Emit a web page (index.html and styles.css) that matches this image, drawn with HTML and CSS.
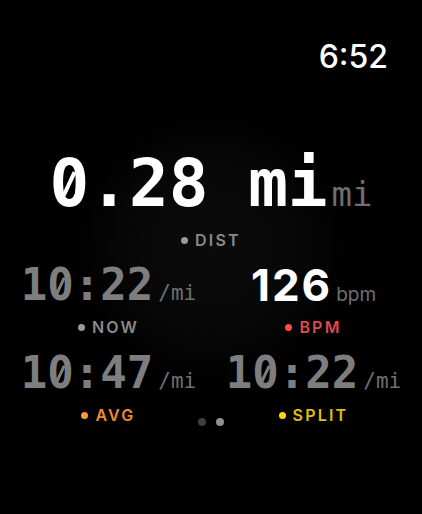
FILE: index.html
```html
<!DOCTYPE html>
<html lang="en">
<head>
<meta charset="utf-8">
<title>Workout</title>
<link rel="stylesheet" href="styles.css">
</head>
<body>
<div class="screen">
  <div class="status">
    <span class="clock">6:52</span>
  </div>

  <div class="hero">
    <span class="hero-value"><span class="z">0</span>.28 mi</span><span class="hero-unit">mi</span>
  </div>
  <div class="label label-dist">
    <span class="dot dot-gray"></span><span class="label-text text-gray">DIST</span>
  </div>

  <div class="grid">
    <div class="metric">
      <div class="reading">
        <span class="value value-mono value-dim">1<span class="z">0</span>:22</span><span class="unit unit-mono">/mi</span>
      </div>
      <div class="label">
        <span class="dot dot-gray"></span><span class="label-text text-gray">NOW</span>
      </div>
    </div>
    <div class="metric">
      <div class="reading">
        <span class="value value-sans">126</span><span class="unit unit-sans">bpm</span>
      </div>
      <div class="label">
        <span class="dot dot-red"></span><span class="label-text text-red">BPM</span>
      </div>
    </div>
    <div class="metric">
      <div class="reading">
        <span class="value value-mono value-dim">1<span class="z">0</span>:47</span><span class="unit unit-mono">/mi</span>
      </div>
      <div class="label">
        <span class="dot dot-orange"></span><span class="label-text text-orange">AVG</span>
      </div>
    </div>
    <div class="metric">
      <div class="reading">
        <span class="value value-mono value-dim">1<span class="z">0</span>:22</span><span class="unit unit-mono">/mi</span>
      </div>
      <div class="label">
        <span class="dot dot-yellow"></span><span class="label-text text-yellow">SPLIT</span>
      </div>
    </div>
  </div>

  <div class="pager">
    <span class="page"></span><span class="page page-active"></span>
  </div>
</div>
</body>
</html>
```

FILE: styles.css
```css
html, body {
  margin: 0;
  padding: 0;
  background: #000;
}

.screen {
  position: relative;
  width: 422px;
  height: 514px;
  overflow: hidden;
  display: flex;
  flex-direction: column;
  background: radial-gradient(circle at 211px 248px, #0b0b0b 0, #080808 70px, #040404 110px, #000 135px);
  font-family: Inter, "Noto Sans", sans-serif;
  color: #fff;
}

.status {
  display: flex;
  justify-content: flex-end;
  padding: 41px 34px 0 0;
}

.clock {
  font-family: Inter, sans-serif;
  font-weight: 500;
  font-size: 32px;
  line-height: 32px;
  color: #fff;
}

.hero {
  display: flex;
  justify-content: center;
  align-items: baseline;
  margin-top: 78px;
}

.hero-value {
  font-family: "DejaVu Sans Mono", monospace;
  font-weight: 700;
  font-size: 66px;
  line-height: 66px;
  color: #fff;
  white-space: pre;
}

.hero-unit {
  font-family: "DejaVu Sans Mono", monospace;
  font-size: 34px;
  line-height: 34px;
  color: #6f6f6f;
  margin-left: 4px;
}

/* slashed zero: hide the dot, draw a short diagonal */
.z {
  position: relative;
}

.z::before {
  content: "";
  position: absolute;
  left: 0.22em;
  top: 0.46em;
  width: 0.16em;
  height: 0.28em;
  background: #000;
}

.z::after {
  content: "";
  position: absolute;
  left: 0.268em;
  top: 0.40em;
  width: 0.066em;
  height: 0.40em;
  background: currentColor;
  transform: rotate(25deg);
}

.label {
  display: flex;
  justify-content: center;
  align-items: center;
  gap: 7px;
  height: 16px;
}

.label-dist {
  margin-top: 15px;
}

.dot {
  width: 7px;
  height: 7px;
  border-radius: 50%;
}

.label-text {
  font-family: Inter, sans-serif;
  font-weight: 600;
  font-size: 16px;
  line-height: 16px;
  letter-spacing: 2.2px;
}

.dot-gray { background: #9a9a9a; }
.text-gray { color: #8a8a8a; }
.dot-red { background: #ff4b4b; }
.text-red { color: #e0484b; }
.dot-orange { background: #ff9a3c; }
.text-orange { color: #ec8a34; }
.dot-yellow { background: #ffd60a; }
.text-yellow { color: #e2bd0c; }

.grid {
  display: grid;
  grid-template-columns: 1fr 1fr;
  padding: 0 6px;
  margin-top: 15px;
  row-gap: 16px;
}

.metric {
  display: flex;
  flex-direction: column;
  align-items: center;
  gap: 12px;
}

.reading {
  display: flex;
  align-items: baseline;
  justify-content: center;
}

.value {
  font-size: 44px;
  line-height: 44px;
  font-weight: 700;
}

.value-mono {
  font-family: "DejaVu Sans Mono", monospace;
}

.value-sans {
  font-family: Inter, sans-serif;
  letter-spacing: 2px;
  color: #fff;
}

.value-dim {
  color: #7e7e7e;
}

.unit {
  margin-left: 5px;
  color: #6f6f6f;
}

.value-sans + .unit {
  margin-left: 4px;
}

.unit-mono {
  font-family: "DejaVu Sans Mono", monospace;
  font-size: 21px;
}

.unit-sans {
  font-family: Inter, sans-serif;
  font-size: 19px;
}

.pager {
  position: absolute;
  left: 0;
  right: 0;
  top: 418px;
  display: flex;
  justify-content: center;
  gap: 10px;
}

.page {
  width: 8px;
  height: 8px;
  border-radius: 50%;
  background: #3f3f3f;
}

.page-active {
  background: #8f8f8f;
}
```
